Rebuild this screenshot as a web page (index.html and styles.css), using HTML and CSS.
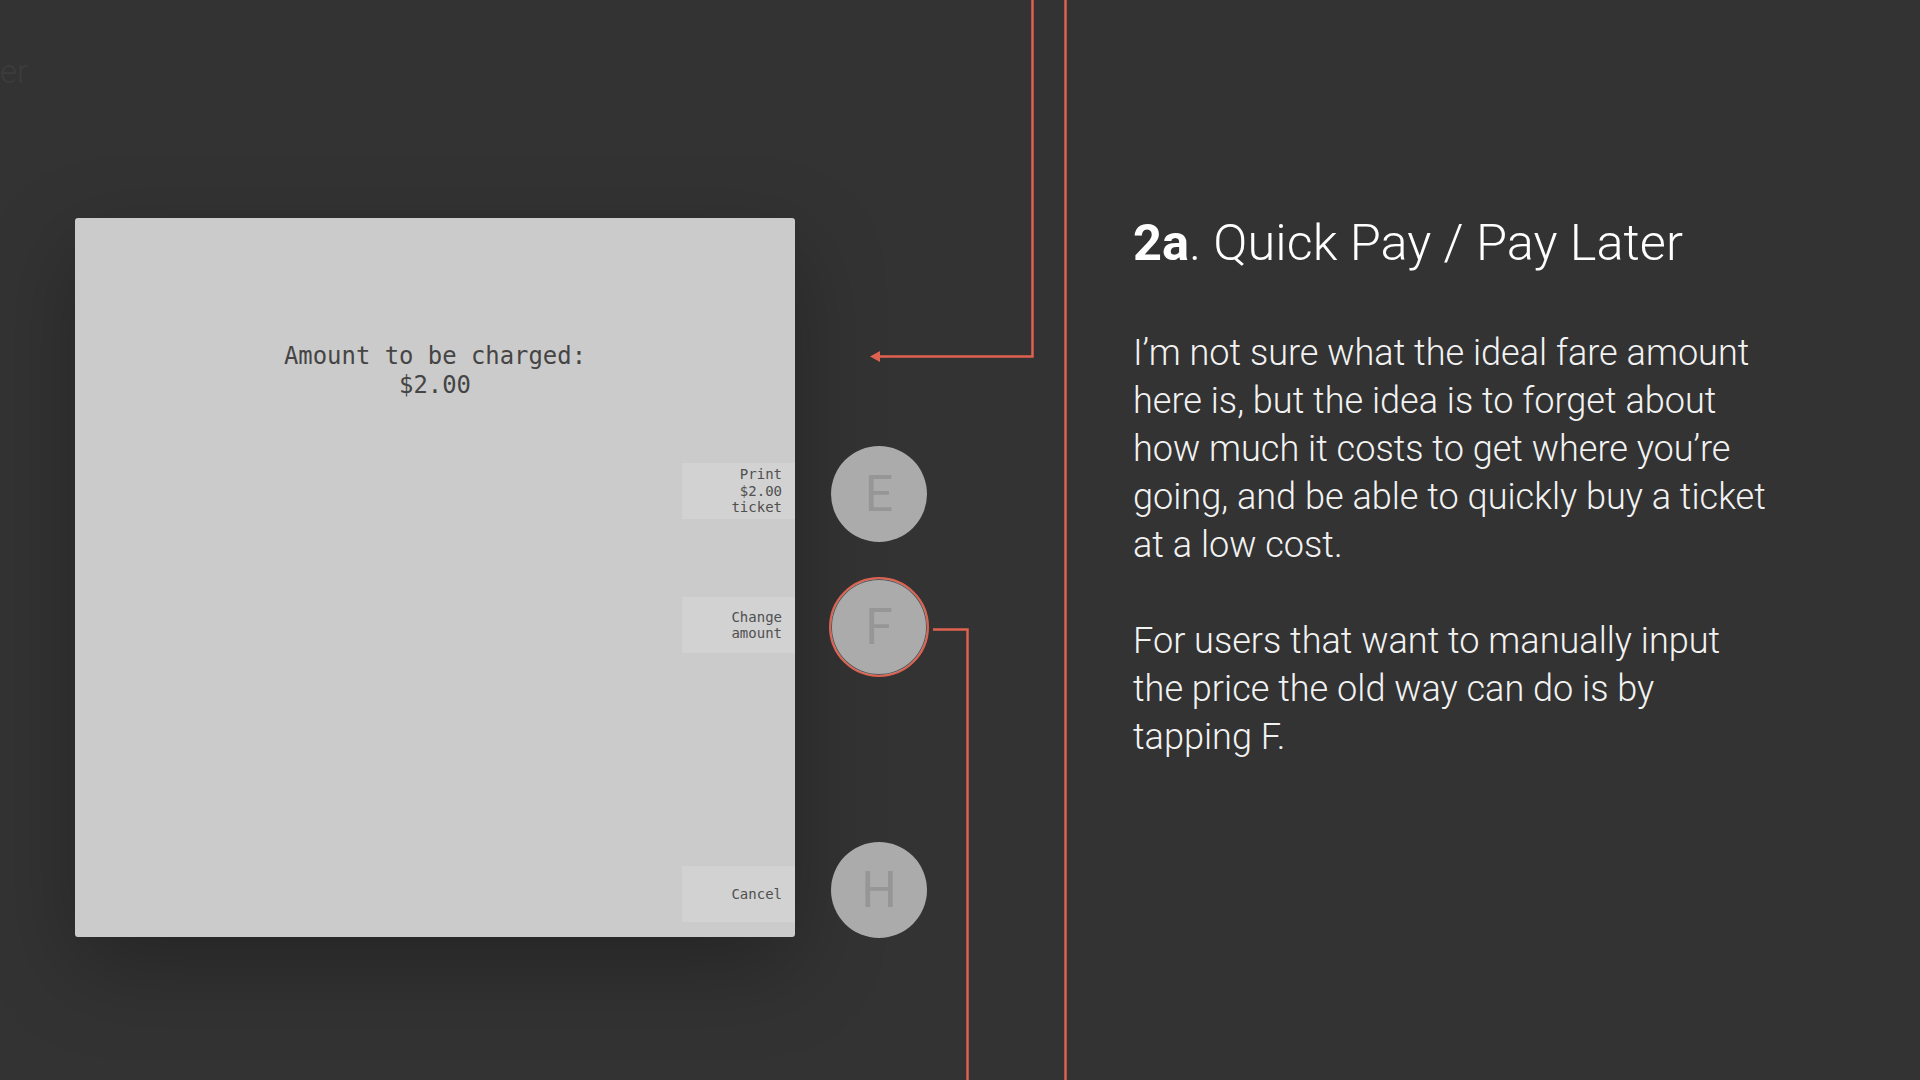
FILE: index.html
```html
<!DOCTYPE html>
<html>
<head>
<meta charset="utf-8">
<link rel="stylesheet" href="styles.css">
</head>
<body>
<div class="ghost">er</div>
<main class="slide">
  <section class="demo">
    <div class="screen">
      <div class="message">Amount to be charged:<br>$2.00</div>
      <div class="softkeys">
        <div class="softkey key-print">Print<br>$2.00<br>ticket</div>
        <div class="softkey key-change">Change<br>amount</div>
        <div class="softkey key-cancel">Cancel</div>
      </div>
    </div>
    <div class="hardkeys">
      <div class="hardkey key-e">E</div>
      <div class="hardkey key-f active">F</div>
      <div class="hardkey key-h">H</div>
    </div>
  </section>
  <section class="notes">
    <h1 class="title"><b>2a</b>. Quick Pay / Pay Later</h1>
    <p class="para">I’m not sure what the ideal fare amount here is, but the idea is to forget about how much it costs to get where you’re going, and be able to quickly buy a ticket at a low cost.</p>
    <p class="para">For users that want to manually input the price the old way can do is by tapping F.</p>
  </section>
</main>
<svg class="connectors" width="1920" height="1080" viewBox="0 0 1920 1080">
  <path d="M1032.5 0 V356.5 H878" fill="none" stroke="#df6150" stroke-width="2.5"/>
  <polygon points="870,356.5 880,351 880,362" fill="#df6150"/>
  <path d="M1065.5 0 V1080" fill="none" stroke="#df6150" stroke-width="2.5"/>
  <path d="M933 629.5 H967.5 V1080" fill="none" stroke="#df6150" stroke-width="2.5"/>
</svg>
</body>
</html>
```
FILE: styles.css
```css
html, body {
  margin: 0;
  padding: 0;
  width: 1920px;
  height: 1080px;
  overflow: hidden;
  background: #333333;
}
body {
  position: relative;
  font-family: "Roboto", "Liberation Sans", sans-serif;
}
.ghost {
  position: absolute;
  left: 0;
  top: 52px;
  font-family: "Roboto Light", "Roboto", sans-serif;
  font-weight: 300;
  font-size: 33px;
  color: #3c3c3c;
}
.slide {
  display: flex;
  align-items: flex-start;
}
.demo {
  display: flex;
  align-items: flex-start;
  padding: 218px 0 0 75px;
}
.screen {
  width: 720px;
  height: 719px;
  background: #cbcbcb;
  border-radius: 3px;
  box-shadow: 0 30px 90px rgba(0, 0, 0, 0.28);
  display: flex;
  flex-direction: column;
  box-sizing: border-box;
  padding-bottom: 15px;
  font-family: "DejaVu Sans Mono", "Liberation Mono", monospace;
}
.message {
  margin-top: 124px;
  text-align: center;
  font-size: 23.9px;
  line-height: 29px;
  color: #454545;
}
.softkeys {
  flex: 1;
  display: flex;
  flex-direction: column;
  align-items: flex-end;
}
.softkey {
  width: 113px;
  height: 56px;
  box-sizing: border-box;
  padding-right: 13px;
  background: #d2d2d2;
  display: flex;
  align-items: center;
  justify-content: flex-end;
  text-align: right;
  font-size: 14px;
  line-height: 16.5px;
  color: #505050;
}
.key-print { margin-top: 63px; }
.key-change { margin-top: 78px; }
.key-cancel { margin-top: auto; }
.hardkeys {
  display: flex;
  flex-direction: column;
  align-items: center;
  margin-left: 36px;
  padding-top: 228px;
  width: 96px;
}
.hardkey {
  width: 96px;
  height: 96px;
  border-radius: 50%;
  background: #ababab;
  color: #969696;
  font-family: "Roboto", sans-serif;
  font-weight: 400;
  font-size: 50px;
  display: flex;
  align-items: center;
  justify-content: center;
  box-sizing: border-box;
}
.hardkey.active {
  width: 100px;
  height: 100px;
  border: 2px solid #df6150;
  box-shadow: inset 0 0 0 1px #555;
}
.key-f { margin-top: 35px; }
.key-h { margin-top: 165px; }
.notes {
  margin-left: 206px;
  padding-top: 213px;
  width: 680px;
  color: #f2f2f2;
  font-family: "Roboto Light", "Roboto", sans-serif;
}
.title {
  margin: 0;
  font-weight: 300;
  font-size: 50.5px;
  line-height: 60px;
  color: #ffffff;
}
.title b {
  font-family: "Roboto", sans-serif;
  font-weight: 700;
}
.para {
  margin: 56px 0 0 0;
  font-weight: 300;
  font-size: 36.1px;
  line-height: 48px;
  width: 644px;
}
.para + .para {
  margin-top: 48px;
}
.connectors {
  position: absolute;
  left: 0;
  top: 0;
  pointer-events: none;
}
```
